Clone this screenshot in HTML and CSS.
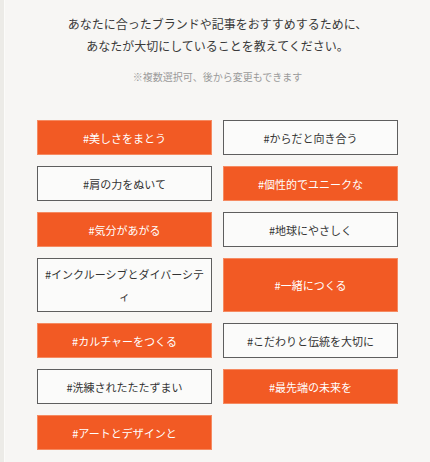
FILE: index.html
```html
<!DOCTYPE html>
<html lang="ja">
<head>
<meta charset="utf-8">
<link rel="stylesheet" href="styles.css">
</head>
<body>
<div class="page">
  <div class="strip"></div>
  <main class="main">
    <p class="lead">あなたに合ったブランドや記事をおすすめするために、<br>あなたが大切にしていることを教えてください。</p>
    <p class="note">※複数選択可、後から変更もできます</p>
    <div class="tags">
      <button class="tag on">#美しさをまとう</button>
      <button class="tag">#からだと向き合う</button>
      <button class="tag">#肩の力をぬいて</button>
      <button class="tag on">#個性的でユニークな</button>
      <button class="tag on">#気分があがる</button>
      <button class="tag">#地球にやさしく</button>
      <button class="tag">#インクルーシブとダイバーシティ</button>
      <button class="tag on">#一緒につくる</button>
      <button class="tag on">#カルチャーをつくる</button>
      <button class="tag">#こだわりと伝統を大切に</button>
      <button class="tag">#洗練されたたたずまい</button>
      <button class="tag on">#最先端の未来を</button>
      <button class="tag on">#アートとデザインと</button>
    </div>
  </main>
</div>
</body>
</html>
```
FILE: styles.css
```css
html, body {
  margin: 0;
  padding: 0;
  background: #f7f6f4;
}
body {
  font-family: "Noto Sans CJK JP", "Noto Sans", sans-serif;
  color: #333;
}
.page {
  display: flex;
  min-height: 462px;
}
.strip {
  width: 4px;
  flex: none;
  background: #ecebe7;
  border-right: 1px solid #fbfbf9;
}
.main {
  flex: 1;
  display: flex;
  flex-direction: column;
  align-items: center;
  padding-top: 13px;
}
.lead {
  margin: 0;
  font-size: 12px;
  line-height: 22px;
  text-align: center;
  color: #3a3a3a;
}
.note {
  margin: 12px 0 0;
  font-size: 10px;
  line-height: 16px;
  color: #9a9a9a;
}
.tags {
  margin-top: 35px;
  width: 361px;
  display: grid;
  grid-template-columns: 175px 175px;
  column-gap: 11px;
  row-gap: 11px;
}
.tag {
  font-family: inherit;
  font-size: 11px;
  line-height: 22px;
  min-height: 35px;
  padding: 4px 6px;
  box-sizing: border-box;
  border: 1px solid #5e5e5e;
  background: #fbfbfa;
  color: #333;
  text-align: center;
  display: flex;
  align-items: center;
  justify-content: center;
  margin: 0;
  border-radius: 0;
}
.tag.on {
  background: #f25a24;
  border-color: #f58a61;
  color: #fff;
}
```
